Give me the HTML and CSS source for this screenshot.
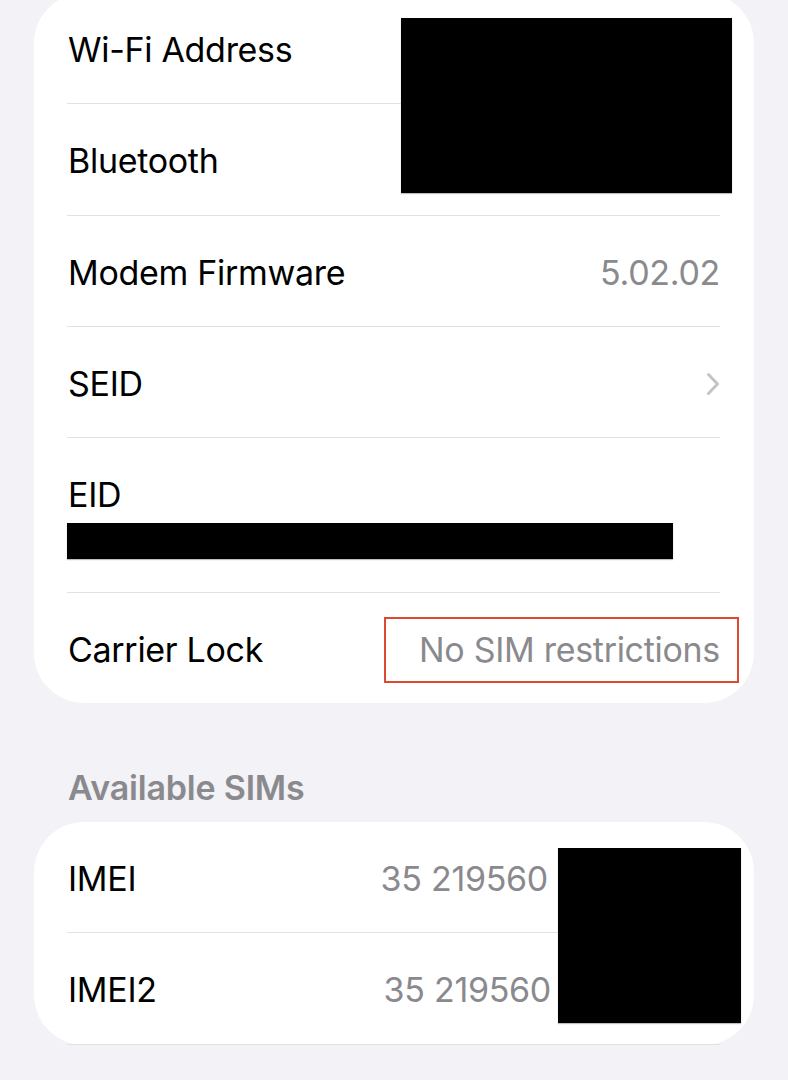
FILE: index.html
```html
<!DOCTYPE html>
<html lang="en">

<head>
    <meta charset="UTF-8">
    <meta name="viewport" content="width=device-width, initial-scale=1.0">
    <title>About</title>
    <link rel="stylesheet" href="styles.css">
</head>

<body>
    <div class="page">
        <div class="card card-top">
            <div class="row">
                <span class="label">Wi-Fi Address</span>
            </div>
            <div class="row">
                <span class="label">Bluetooth</span>
            </div>
            <div class="redact redact-mac"></div>
            <div class="row">
                <span class="label">Modem Firmware</span>
                <span class="value">5.02.02</span>
            </div>
            <div class="row">
                <span class="label">SEID</span>
                <svg class="chevron" width="14" height="24" viewBox="0 0 14 24">
                    <path d="M2.5 2.5 L11.5 12 L2.5 21.5" fill="none" stroke="#c4c4c7" stroke-width="3"
                        stroke-linecap="round" stroke-linejoin="round" />
                </svg>
            </div>
            <div class="row row-stack">
                <span class="label">EID</span>
                <div class="redact-bar"></div>
            </div>
            <div class="row">
                <span class="label">Carrier Lock</span>
                <span class="value highlighted">No SIM restrictions</span>
            </div>
        </div>

        <h3 class="section-title">Available SIMs</h3>
        <div class="card card-sims">
            <div class="row">
                <span class="label">IMEI</span>
                <span class="value imei">35 219560</span>
            </div>
            <div class="row">
                <span class="label">IMEI2</span>
                <span class="value imei imei-2">35 219560</span>
            </div>
            <div class="redact redact-imei"></div>
        </div>
    </div>
</body>

</html>
```

FILE: styles.css
```css
body {
    margin: 0;
    background: #f2f2f7;
    font-family: "Inter", "Liberation Sans", sans-serif;
    color: #000;
}

.page {
    margin-top: -7px;
}

.card {
    position: relative;
    margin: 0 34px;
    background: #fff;
    border-radius: 50px;
}

.row {
    display: flex;
    align-items: center;
    justify-content: space-between;
    box-sizing: border-box;
    height: 111.33px;
    margin: 0 34px 0 33px;
    padding-top: 4px;
    border-bottom: 1px solid #e2e2e5;
    font-size: 34px;
    line-height: 42px;
    letter-spacing: -0.3px;
}

.row:last-child {
    height: 110px;
    border-bottom: none;
}

.card-sims .row:first-child {
    height: 111px;
}

.label {
    padding-left: 1px;
}

.value {
    color: #8a8a8e;
}

.chevron {
    display: block;
    margin-top: 0;
}

.row-stack {
    height: 155px;
    flex-direction: column;
    align-items: flex-start;
    justify-content: flex-start;
    padding-top: 36px;
}

.redact-bar {
    width: 606px;
    height: 36px;
    margin-top: 7px;
    background: #000;
    box-shadow: 0 1px 1px rgba(0, 0, 0, .25);
}

.redact {
    position: absolute;
    height: 175px;
    background: #000;
    box-shadow: 0 1px 1px rgba(0, 0, 0, .25);
}

.redact-mac {
    top: 25px;
    left: 367px;
    width: 331px;
}

.redact-imei {
    top: 26px;
    left: 524px;
    width: 183px;
}

.highlighted {
    position: relative;
}

.highlighted::after {
    content: "";
    position: absolute;
    top: -12px;
    bottom: -12px;
    left: -35px;
    right: -19px;
    border: 2px solid #dc4a32;
}

.section-title {
    margin: 64px 0 13px 68px;
    font-size: 34px;
    line-height: 42px;
    font-weight: 600;
    letter-spacing: -0.2px;
    color: #8a8a8e;
}

.imei {
    margin-right: 172px;
}

.imei-2 {
    margin-right: 169px;
}
```
